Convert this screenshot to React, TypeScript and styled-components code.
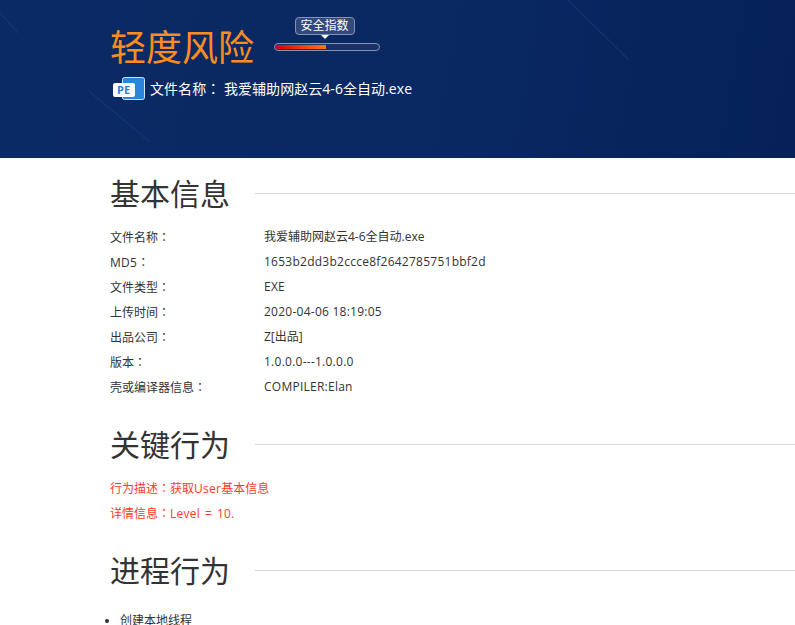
import styled, { createGlobalStyle } from 'styled-components';

const GlobalStyle = createGlobalStyle`
  html, body {
    margin: 0;
    padding: 0;
    height: 100%;
    overflow: hidden;
    background: #fff;
    font-family: "Open Sans", "Noto Sans CJK SC", sans-serif;
  }
`;

const Banner = styled.header`
  position: relative;
  height: 158px;
  padding: 16px 0 0 110px;
  box-sizing: border-box;
  overflow: hidden;
  background: linear-gradient(100deg, #0a2a65 0%, #0a2962 50%, #06215a 100%);
`;

const Streaks = styled.svg`
  position: absolute;
  inset: 0;
  width: 100%;
  height: 100%;
`;

const BannerBody = styled.div`
  position: relative;
`;

const LevelRow = styled.div`
  display: flex;
  align-items: flex-start;
  height: 56px;
`;

const Level = styled.h1`
  margin: 8px 0 0;
  font-size: 36px;
  line-height: 48px;
  font-weight: 400;
  color: #ff8c1f;
`;

const Gauge = styled.div`
  display: flex;
  flex-direction: column;
  align-items: center;
  width: 106px;
  margin-left: 20px;
`;

const GaugeLabel = styled.div`
  position: relative;
  width: 60px;
  height: 18px;
  box-sizing: border-box;
  border: 1px solid #8493b5;
  border-radius: 4px;
  background: #33497b;
  color: #fff;
  font-size: 12px;
  line-height: 16px;
  text-align: center;
  margin: 1px 0 8px -5px;

  &::after {
    content: '';
    position: absolute;
    left: 25px;
    top: 17px;
    border: 4px solid transparent;
    border-top: 4px solid #fff;
    border-bottom: 0;
  }
`;

const GaugeTrack = styled.div`
  width: 106px;
  height: 8px;
  padding: 1px;
  box-sizing: border-box;
  border: 1px solid #8493b5;
  border-radius: 4px;
  background: #1b3166;
  overflow: hidden;
`;

const GaugeFill = styled.div<{ $value: number }>`
  width: ${({ $value }) => $value}%;
  height: 100%;
  background: linear-gradient(90deg, #d90009, #ff7a10);
`;

const FileRow = styled.div`
  display: flex;
  align-items: center;
  margin: 4px 0 0 3px;
`;

const FileIcon = styled.svg`
  flex-shrink: 0;
  margin-top: 1px;
`;

const FileName = styled.span`
  margin-left: 5px;
  color: #fff;
  font-size: 14px;
  line-height: 24px;
  letter-spacing: 0.05px;
`;

const Colon = styled.span`
  font-family: "Noto Sans CJK TC", sans-serif;
`;

const Latin = styled.span`
  letter-spacing: 0.25px;
`;

const Content = styled.main`
  padding: 16px 0 0 110px;
`;

const Section = styled.section`
  margin-bottom: 26px;
`;

const HeadingRow = styled.div`
  display: flex;
  align-items: center;
  margin-bottom: 10px;
`;

const Heading = styled.h2`
  margin: 0;
  font-size: 30px;
  line-height: 40px;
  font-weight: 400;
  color: #333;
`;

const HeadingRule = styled.div`
  flex: 1;
  height: 1px;
  margin-left: 25px;
  margin-top: -1px;
  background: #d9d9d9;
`;

const InfoRow = styled.div`
  display: flex;
  height: 25px;
  font-size: 12px;
  line-height: 25px;
  color: #333;
`;

const InfoLabel = styled.span`
  width: 154px;
  flex-shrink: 0;
`;

const Alert = styled.div`
  height: 25px;
  font-size: 12px;
  line-height: 25px;
  color: #ff3a1f;
`;

const AlertValue = styled.span`
  letter-spacing: 0.25px;
  word-spacing: 1.5px;
`;

const Steps = styled.ul`
  margin: 17px 0 0;
  padding: 0 0 0 10px;
  font-size: 12px;
  line-height: 25px;
  color: #333;
`;

const PeIcon = () => (
  <FileIcon width="32" height="24" viewBox="0 0 32 24">
    <rect x="9.5" y="0.5" width="22" height="22" rx="2" fill="#2a86dc" stroke="#cfe3f7" />
    <rect x="0" y="6" width="22" height="14" rx="2" fill="#fff" />
    <text x="4" y="17" fontSize="11" fontWeight="700" fontFamily="Open Sans, sans-serif" fill="#2a7fd6">
      PE
    </text>
  </FileIcon>
);

const info: { label: string; latinLabel?: boolean; value: string; latinValue?: boolean }[] = [
  { label: '文件名称', value: '我爱辅助网赵云4-6全自动.exe' },
  { label: 'MD5', latinLabel: true, value: '1653b2dd3b2ccce8f2642785751bbf2d', latinValue: true },
  { label: '文件类型', value: 'EXE', latinValue: true },
  { label: '上传时间', value: '2020-04-06 18:19:05', latinValue: true },
  { label: '出品公司', value: 'Z[出品]' },
  { label: '版本', value: '1.0.0.0---1.0.0.0', latinValue: true },
  { label: '壳或编译器信息', value: 'COMPILER:Elan', latinValue: true },
];

const App = () => {
  return (
    <>
      <GlobalStyle />
      <Banner>
        <Streaks viewBox="0 0 795 158">
          <g stroke="#143c7c" strokeWidth="1.5" opacity="0.6">
            <line x1="0" y1="13" x2="18" y2="33" />
            <line x1="568" y1="0" x2="629" y2="60" />
            <line x1="90" y1="92" x2="150" y2="142" />
          </g>
        </Streaks>
        <BannerBody>
          <LevelRow>
            <Level>轻度风险</Level>
            <Gauge>
              <GaugeLabel>安全指数</GaugeLabel>
              <GaugeTrack>
                <GaugeFill $value={49} />
              </GaugeTrack>
            </Gauge>
          </LevelRow>
          <FileRow>
            <PeIcon />
            <FileName>
              文件名称<Colon>：</Colon> 我爱辅助网赵云4-6全自动.exe
            </FileName>
          </FileRow>
        </BannerBody>
      </Banner>
      <Content>
        <Section>
          <HeadingRow>
            <Heading>基本信息</Heading>
            <HeadingRule />
          </HeadingRow>
          {info.map(({ label, latinLabel, value, latinValue }) => (
            <InfoRow key={label}>
              <InfoLabel>
                {latinLabel ? <Latin>{label}</Latin> : label}
                <Colon>：</Colon>
              </InfoLabel>
              {latinValue ? <Latin>{value}</Latin> : <span>{value}</span>}
            </InfoRow>
          ))}
        </Section>
        <Section>
          <HeadingRow>
            <Heading>关键行为</Heading>
            <HeadingRule />
          </HeadingRow>
          <Alert>
            行为描述<Colon>：</Colon>获取<Latin>User</Latin>基本信息
          </Alert>
          <Alert>
            详情信息<Colon>：</Colon>
            <AlertValue>Level = 10.</AlertValue>
          </Alert>
        </Section>
        <Section>
          <HeadingRow>
            <Heading>进程行为</Heading>
            <HeadingRule />
          </HeadingRow>
          <Steps>
            <li>创建本地线程</li>
          </Steps>
        </Section>
      </Content>
    </>
  );
};

export default App;
